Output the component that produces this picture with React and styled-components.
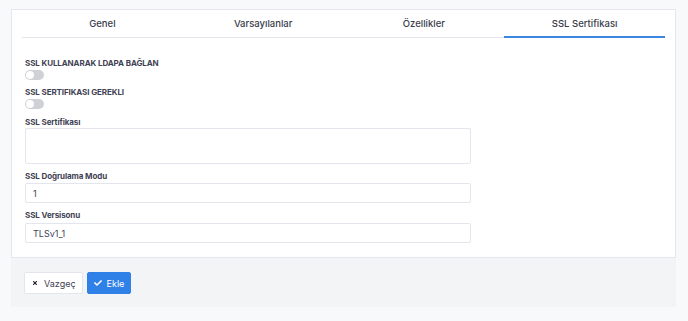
import React from "react";
import styled, { createGlobalStyle } from "styled-components";
import { FaTimes, FaCheck } from "react-icons/fa";

const Global = createGlobalStyle`
  html, body { margin: 0; padding: 0; background: #f8f9fb; }
  body { font-family: Inter, "Open Sans", sans-serif; color: #3f4254; }
  * { box-sizing: border-box; }
`;

const Page = styled.div`
  padding: 9px 12px 15px 11px;
  width: 688px;
  height: 321px;
`;

const Card = styled.div`
  background: #fff;
  border: 1px solid #e6e7ee;
  padding: 0 10px 14px;
`;

const Tabs = styled.div`
  display: flex;
  border-bottom: 1px solid #e4e6ec;
  height: 28px;
`;

const Tab = styled.div`
  flex: 1;
  display: flex;
  align-items: center;
  justify-content: center;
  font-size: 9.5px;
  font-weight: 500;
  color: #3a3d4b;
  margin-bottom: -1px;
  border-bottom: 2px solid ${(p) => (p.$active ? "#3d86e0" : "transparent")};
  padding-top: 1px;
`;

const Form = styled.div`
  padding: 19px 3px 0;
  display: flex;
  flex-direction: column;
`;

const Field = styled.div`
  display: flex;
  flex-direction: column;
  margin-top: ${(p) => p.$mt ?? 6}px;
`;

const Label = styled.div`
  font-size: 8px;
  font-weight: 700;
  line-height: 12px;
  letter-spacing: -0.1px;
  color: #3f4254;
  margin-bottom: ${(p) => p.$mb ?? 1}px;
`;

const Toggle = styled.div`
  width: 19px;
  height: 10px;
  border-radius: 5px;
  background: #cfd1d6;
  position: relative;
  &::after {
    content: "";
    position: absolute;
    left: 1px;
    top: 1px;
    width: 8px;
    height: 8px;
    border-radius: 50%;
    background: #fff;
  }
`;

const TextArea = styled.div`
  width: 446px;
  height: 36px;
  border: 1px solid #e4e6ee;
  border-radius: 2px;
  background: #fff;
`;

const Input = styled.div`
  width: 446px;
  height: 20px;
  border: 1px solid #e4e6ee;
  border-radius: 2px;
  background: #fff;
  display: flex;
  align-items: center;
  padding-left: 7px;
  font-size: 9px;
  color: #3f4254;
`;

const Footer = styled.div`
  background: #f3f4f6;
  padding: 14px 13px 13px;
  display: flex;
  gap: 4px;
`;

const Button = styled.div`
  height: 22px;
  display: flex;
  align-items: center;
  gap: ${(p) => (p.$primary ? 5 : 6)}px;
  border-radius: 2px;
  font-size: 9px;
  padding: 0 6px 0 ${(p) => (p.$primary ? 6 : 7)}px;
  background: ${(p) => (p.$primary ? "#2f81e8" : "#fff")};
  color: ${(p) => (p.$primary ? "#fff" : "#3f4254")};
  border: 1px solid ${(p) => (p.$primary ? "#2f81e8" : "#e4e6ee")};
  svg {
    width: ${(p) => (p.$primary ? 8 : 6)}px;
    height: ${(p) => (p.$primary ? 8 : 6)}px;
    color: ${(p) => (p.$primary ? "#fff" : "#1e1f26")};
  }
`;

export default function App() {
  return (
    <>
      <Global />
      <Page>
        <Card>
          <Tabs>
            <Tab>Genel</Tab>
            <Tab>Varsayılanlar</Tab>
            <Tab>Özellikler</Tab>
            <Tab $active>SSL Sertifikası</Tab>
          </Tabs>
          <Form>
            <Field $mt={0}>
              <Label>SSL KULLANARAK LDAPA BAĞLAN</Label>
              <Toggle />
            </Field>
            <Field>
              <Label>SSL SERTIFIKASI GEREKLI</Label>
              <Toggle />
            </Field>
            <Field $mt={7}>
              <Label $mb={0}>SSL Sertifikası</Label>
              <TextArea />
            </Field>
            <Field>
              <Label>SSL Doğrulama Modu</Label>
              <Input>1</Input>
            </Field>
            <Field>
              <Label $mb={2}>SSL Versisonu</Label>
              <Input>TLSv1_1</Input>
            </Field>
          </Form>
        </Card>
        <Footer>
          <Button>
            <FaTimes />
            Vazgeç
          </Button>
          <Button $primary>
            <FaCheck />
            Ekle
          </Button>
        </Footer>
      </Page>
    </>
  );
}
